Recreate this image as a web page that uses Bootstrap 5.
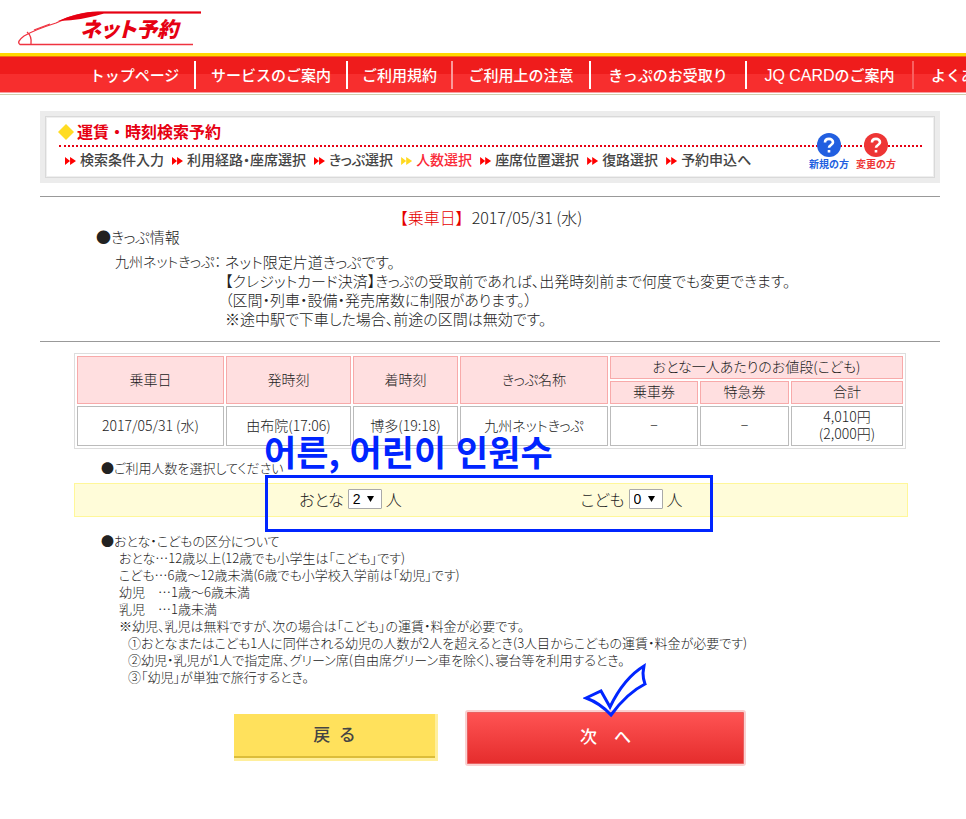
<!DOCTYPE html>
<html lang="ja">
<head>
<meta charset="utf-8">
<meta name="viewport" content="width=device-width, initial-scale=1">
<title>ネット予約</title>
<link rel="stylesheet" href="https://cdn.jsdelivr.net/npm/bootstrap@5.3.0/dist/css/bootstrap.min.css">
<style>
body{font-family:"Noto Sans CJK JP","Liberation Sans",sans-serif;font-weight:300;color:#222;background:#fff;font-feature-settings:"palt";font-size:14px;line-height:17px;overflow-x:hidden}
.brand{height:53px;padding:8px 0 0 16px}
.brand svg,.tick svg{display:block}
.menu{border-top:3px solid #ffd800;height:42px;overflow:hidden;border-bottom:1px solid #cfcfae}
.menu ul{background:linear-gradient(#ef1c1c 50%,#f72e2e 50%);border-top:1px solid #f07010;border-bottom:1px solid #f8a0a0;height:37px;margin:0;padding:0 0 0 75px;list-style:none;display:grid;grid-template-columns:121px 152px 105px 138px 156px 167px 124px}
.menu li{border-right:2px solid #fff;height:28px;margin-top:4px}
.menu li.dim{border-color:#fa9a9a}
.menu li.faint{border-color:#f86060}
.menu li:last-child{border:0}
.menu a{display:block;color:#fff;text-decoration:none;font-size:15px;font-weight:500;line-height:28px;text-align:center;white-space:nowrap;font-feature-settings:normal}
.latin{font-family:"Liberation Sans",sans-serif;font-size:16px}
.page{padding:16px 26px 0 40px}
.flow{background:#fff;border:5px solid #ececec;height:72px}
.flow-in{border:1px solid #d9d9d9;box-shadow:inset 0 0 0 1px #efefef;height:62px;padding:4px 12px 0 12px}
.flow h1{font-size:16px;line-height:20px;font-weight:700;color:#e60012;margin:0;font-feature-settings:normal}
.flow h1 svg{margin-right:3px;margin-top:1px}
.dots{border-top:2px dotted #e60012;margin:4px 0 0 1px}
.steps{list-style:none;margin:2px 0 0 7px;padding:0;font-weight:500;font-size:14px;line-height:20px;gap:8px;color:#444}
.steps li::before{content:"";display:inline-block;width:11px;height:8px;margin-right:4px;background:#f00;clip-path:polygon(0 0,46% 50%,46% 0,100% 50%,46% 100%,46% 50%,0 100%)}
.steps .on{color:#fa2a38}
.steps .on::before{background:#ffd91f}
.helps{right:39px;top:17px;gap:7px}
.helps a{font-size:10px;line-height:12px;font-weight:700;text-decoration:none;text-align:center;color:#225fe0;white-space:nowrap;font-feature-settings:normal}
.helps a svg{display:block;margin:0 auto 1px}
.helps a.chg{color:#ee3535}
.ride{border-top:1px solid #999;margin-top:13px;border-bottom:1px solid #999;height:146px;font-size:15px;line-height:19px}
.ride .date{text-align:center;padding:11px 0 0 2px;font-size:16px;line-height:19px}
.ride h2,.note h2{font-weight:300;margin:0}
.ride h2{font-size:15px;line-height:18px;padding:1px 0 0 56px}
.ride dl{margin:6px 0 0 75px}
.ride dt{font-weight:300;width:110px;font-size:14px}
.ride dd{margin:0}
.main{padding:11px 32px 0 34px}
.fare{width:calc(100% - 2px);table-layout:fixed;border:1px solid #ddd;border-collapse:separate;border-spacing:2px;text-align:center}
.fare th,.fare td{border:1px solid #bbb;padding:0 0 2px;font-weight:300;line-height:17px}
.fare th{background:#ffdfe0;border-color:#f8aaaa;height:23px}
.fare td{height:40px}
.note{margin-top:15px;font-size:13px}
.note h2{font-size:13px;line-height:17px;padding-left:27px}
.pick{margin-top:10px}
.count{background:#fffcd9;border:1px solid #fff799;height:34px;margin-top:7px;position:relative;font-size:16px}
.count .in{padding-left:224px;gap:179px;height:30px}
.count .form-select{width:34px;height:20px;padding:0 12px 0 4px;border:1px solid #a9a9a9;border-radius:1px;font:14px/18px "Liberation Sans",sans-serif;color:#000;background-color:#fff;background-position:right 7px center;background-size:7px 6px;--bs-form-select-bg-img:url("data:image/svg+xml,%3csvg xmlns='http://www.w3.org/2000/svg' viewBox='0 0 7 6'%3e%3cpath d='M0 0h7L3.500 6z'/%3e%3c/svg%3e")}
.ring{left:190px;top:-9px;width:448px;height:57px;border:3px solid #0025ff;pointer-events:none}
.memo{left:189px;top:-55px;color:#0025ff;font:700 35px/44px "Noto Sans CJK KR",sans-serif;white-space:nowrap;font-feature-settings:normal}
.note ul{list-style:none;margin:0;padding:0 0 0 45px}
.note ul ul{padding-left:9px}
.acts{margin-top:25px;gap:27px;padding-left:160px}
.acts .btn{border-radius:0;font-weight:500;font-size:17px;line-height:20px;white-space:pre;padding:0 0 4px;font-feature-settings:normal}
.acts .back{width:204px;height:47px;background:#ffe15c;border:0;border-bottom:3px solid #ffef9c;border-right:3px solid #ffef9c;box-shadow:inset 0 -2px #dcbd3a;color:#444;margin-top:4px}
.acts .fwd{width:281px;height:56px;border:2px solid #fad0d0;border-radius:3px;background:linear-gradient(#ff5454,#e52c2c);box-shadow:inset 0 0 0 1px #e96060;color:#fff}
.tick{left:118px;top:-48px;pointer-events:none}
.day{color:#e60000}
</style>
</head>
<body>
<header>
<div class="brand"><a href="#" aria-label="ネット予約"><svg width="190" height="40" viewBox="0 0 190 40"><path d="M185 4.500H76Q58 6 40 15Q18 22 8 28Q0 34 4 36.500H177" fill="none" stroke="#ef3340" stroke-width="1.300"/><path d="M185 3.500V5.500H88Q68 12 42 13Q62 4 82 3.500Z" fill="#e60012"/><path d="M11 24Q16 28 15 36M18 22L34 16" fill="none" stroke="#ef3340" stroke-width="1.300"/><text x="64" y="29" font-family="Noto Sans CJK JP" font-size="21" font-weight="900" font-style="italic" fill="#e60012">ネット予約</text></svg></a></div>
<nav class="menu"><ul>
<li><a href="#">トップページ</a></li><li><a href="#">サービスのご案内</a></li><li class="dim"><a href="#">ご利用規約</a></li><li><a href="#">ご利用上の注意</a></li><li><a href="#">きっぷのお受取り</a></li><li class="faint"><a href="#"><span class="latin">JQ CARD</span>のご案内</a></li><li><a href="#">よくある質問</a></li>
</ul></nav>
</header>
<main class="page">
<section class="flow position-relative"><div class="flow-in">
<h1 class="d-flex align-items-center"><svg width="16" height="16" viewBox="0 0 16 16"><path d="M8 0l8 8-8 8-8-8z" fill="#ffdc22"/></svg>運賃・時刻検索予約</h1>
<div class="dots"></div>
<ol class="steps d-flex text-nowrap"><li>検索条件入力</li><li>利用経路・座席選択</li><li>きっぷ選択</li><li class="on">人数選択</li><li>座席位置選択</li><li>復路選択</li><li>予約申込へ</li></ol>
</div>
<div class="helps position-absolute d-flex">
<a href="#"><svg width="24" height="24" viewBox="0 0 24 24"><circle cx="12" cy="12" r="12" fill="#225fe0"/><path d="M8 9.500C8 4.500 16 4.800 16 9.200C16 12 12 12 12 14.800M12 17V19.600" fill="none" stroke="#fff" stroke-width="2.600"/></svg>新規の方</a>
<a href="#" class="chg"><svg width="24" height="24" viewBox="0 0 24 24"><circle cx="12" cy="12" r="12" fill="#ee3535"/><path d="M8 9.500C8 4.500 16 4.800 16 9.200C16 12 12 12 12 14.800M12 17V19.600" fill="none" stroke="#fff" stroke-width="2.600"/></svg>変更の方</a>
</div></section>
<section class="ride">
<div class="date"><span class="day">【乗車日】</span>&ensp;2017/05/31 (水)</div>
<h2>●きっぷ情報</h2>
<dl class="d-flex"><dt>九州ネットきっぷ：</dt><dd>ネット限定片道きっぷです。<br>【クレジットカード決済】きっぷの受取前であれば、出発時刻前まで何度でも変更できます。<br>（区間・列車・設備・発売席数に制限があります。）<br>※途中駅で下車した場合、前途の区間は無効です。</dd></dl>
</section>
<div class="main">
<table class="fare">
<colgroup><col style="width:147px"><col style="width:125px"><col style="width:105px"><col style="width:148px"><col style="width:88px"><col style="width:89px"><col></colgroup>
<thead><tr><th rowspan="2">乗車日</th><th rowspan="2">発時刻</th><th rowspan="2">着時刻</th><th rowspan="2">きっぷ名称</th><th colspan="3">おとな一人あたりのお値段(こども)</th></tr>
<tr><th>乗車券</th><th>特急券</th><th>合計</th></tr></thead>
<tbody><tr><td>2017/05/31 (水)</td><td>由布院(17:06)</td><td>博多(19:18)</td><td>九州ネットきっぷ</td><td>−</td><td>−</td><td>4,010円<br>(2,000円)</td></tr></tbody>
</table>
<section class="note pick"><h2>●ご利用人数を選択してください</h2></section>
<form class="count">
<div class="in d-flex align-items-center">
<div class="d-flex align-items-center gap-1"><label for="adult">おとな</label><select id="adult" class="form-select"><option>0</option><option>1</option><option selected>2</option></select><span>人</span></div>
<div class="d-flex align-items-center gap-1"><label for="child">こども</label><select id="child" class="form-select"><option selected>0</option><option>1</option><option>2</option></select><span>人</span></div>
</div>
<div class="ring position-absolute"></div>
<div class="memo position-absolute" lang="ko">어른, 어린이 인원수</div>
</form>
<section class="note"><h2>●おとな・こどもの区分について</h2>
<ul><li>おとな…12歳以上(12歳でも小学生は「こども」です)</li><li>こども…6歳～12歳未満(6歳でも小学校入学前は「幼児」です)</li><li>幼児　…1歳～6歳未満</li><li>乳児　…1歳未満</li><li>※幼児、乳児は無料ですが、次の場合は「こども」の運賃・料金が必要です。
<ul><li>①おとなまたはこども1人に同伴される幼児の人数が2人を超えるとき(3人目からこどもの運賃・料金が必要です)</li><li>②幼児・乳児が1人で指定席、グリーン席(自由席グリーン車を除く)、寝台等を利用するとき。</li><li>③「幼児」が単独で旅行するとき。</li></ul></li></ul></section>
<div class="acts d-flex align-items-start">
<button type="button" class="btn back">戻&ensp;る</button>
<div class="position-relative"><button type="button" class="btn fwd">次　へ</button>
<div class="tick position-absolute"><svg width="66" height="58" viewBox="0 0 66 58"><path d="M3 36L18 29L27 45Q41 16 61 4L60 11Q60 17 62 22Q44 31 28 53Q17 41 3 36Z" fill="none" stroke="#0025ff" stroke-width="3"/></svg></div></div>
</div>
</div>
</main>
<script src="https://cdn.jsdelivr.net/npm/bootstrap@5.3.0/dist/js/bootstrap.bundle.min.js"></script>
</body>
</html>
